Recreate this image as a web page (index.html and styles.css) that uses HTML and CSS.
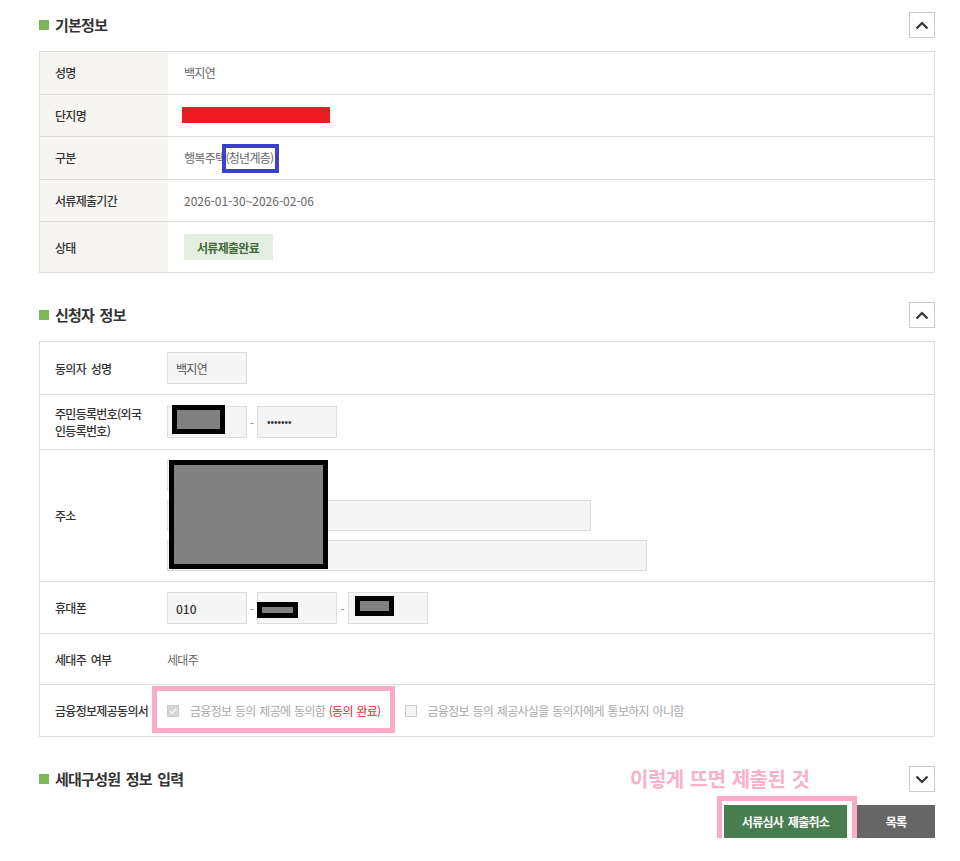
FILE: index.html
```html
<!DOCTYPE html>
<html lang="ko">
<head>
<meta charset="utf-8">
<title>서류제출</title>
<link rel="stylesheet" href="styles.css">
</head>
<body>
<div class="page">
  <section class="sec">
    <div class="sec-head">
      <h2 class="sec-title">기본정보</h2>
      <button class="toggle" type="button"><svg width="14" height="9" viewBox="0 0 14 9"><polyline points="1.5,7.5 7,2 12.5,7.5" fill="none" stroke="#333" stroke-width="2.2"/></svg></button>
    </div>
    <div class="info-table">
      <div class="info-row"><div class="info-th">성명</div><div class="info-td">백지연</div></div>
      <div class="info-row"><div class="info-th">단지명</div><div class="info-td"><span class="redact-red"></span></div></div>
      <div class="info-row"><div class="info-th">구분</div><div class="info-td">행복주택<span class="mark">(청년계층)</span></div></div>
      <div class="info-row"><div class="info-th">서류제출기간</div><div class="info-td num">2026-01-30~2026-02-06</div></div>
      <div class="info-row info-row--status"><div class="info-th">상태</div><div class="info-td"><span class="badge">서류제출완료</span></div></div>
    </div>
  </section>

  <section class="sec">
    <div class="sec-head">
      <h2 class="sec-title">신청자 정보</h2>
      <button class="toggle" type="button"><svg width="14" height="9" viewBox="0 0 14 9"><polyline points="1.5,7.5 7,2 12.5,7.5" fill="none" stroke="#333" stroke-width="2.2"/></svg></button>
    </div>
    <div class="form-table">
      <div class="form-row">
        <div class="form-th">동의자 성명</div>
        <div class="form-td"><div class="field">백지연</div></div>
      </div>
      <div class="form-row">
        <div class="form-th">주민등록번호(외국<br>인등록번호)</div>
        <div class="form-td">
          <div class="field"><span class="redact redact--rrn"></span></div>
          <span class="dash">-</span>
          <div class="field field--dots"><span class="dots">•••••••</span></div>
        </div>
      </div>
      <div class="form-row">
        <div class="form-th">주소</div>
        <div class="form-td">
          <div class="addr">
            <div class="field field--addr field--zip"></div>
            <div class="field field--addr field--addr1"></div>
            <div class="field field--addr field--addr2"></div>
            <span class="redact redact--addr"></span>
          </div>
        </div>
      </div>
      <div class="form-row">
        <div class="form-th">휴대폰</div>
        <div class="form-td form-td--tight">
          <div class="field field--strong">010</div>
          <span class="dash">-</span>
          <div class="field"><span class="redact redact--ph2"></span></div>
          <span class="dash dash--wide">-</span>
          <div class="field"><span class="redact redact--ph3"></span></div>
        </div>
      </div>
      <div class="form-row form-row--text">
        <div class="form-th">세대주 여부</div>
        <div class="form-td form-td--value">세대주</div>
      </div>
      <div class="form-row form-row--text form-row--agree">
        <div class="form-th">금융정보제공동의서</div>
        <div class="form-td">
          <span class="check check--on"><svg width="10" height="10" viewBox="0 0 10 10"><polyline points="2,5.2 4.2,7.4 8.2,2.8" fill="none" stroke="#f4f4f4" stroke-width="1.6"/></svg></span>
          <span class="agree-text">금융정보 등의 제공에 동의함 <span class="agree-done">(동의 완료)</span></span>
          <span class="check check--off"></span>
          <span class="agree-text">금융정보 등의 제공사실을 동의자에게 통보하지 아니함</span>
        </div>
        <span class="pink-ring pink-ring--agree"></span>
      </div>
    </div>
  </section>

  <section class="sec sec--last">
    <div class="sec-head">
      <h2 class="sec-title">세대구성원 정보 입력</h2>
      <span class="note">이렇게 뜨면 제출된 것</span>
      <button class="toggle" type="button"><svg width="14" height="9" viewBox="0 0 14 9"><polyline points="1.5,1.5 7,7 12.5,1.5" fill="none" stroke="#333" stroke-width="2.2"/></svg></button>
    </div>
  </section>

  <div class="actions">
    <button class="btn btn--primary" type="button">서류심사 제출취소</button>
    <button class="btn btn--list" type="button">목록</button>
  </div>
</div>
</body>
</html>
```

FILE: styles.css
```css
* { box-sizing: border-box; }

body {
  margin: 0;
  background: #fff;
  font-family: "Noto Sans CJK KR", sans-serif;
  font-size: 12px;
  color: #333;
  letter-spacing: -0.7px;
  word-spacing: 2px;
}

.page {
  padding: 12px 25px 0 39px;
}

.sec { margin-bottom: 29px; }
.sec--last { margin-bottom: 13px; }

.sec-head {
  position: relative;
  display: flex;
  align-items: center;
  justify-content: space-between;
  height: 26px;
  margin-bottom: 13px;
}

.sec-title {
  margin: 0;
  display: flex;
  align-items: center;
  gap: 6px;
  font-size: 15px;
  font-weight: 700;
  line-height: 26px;
  color: #333;
  letter-spacing: -0.75px;
  word-spacing: 2px;
}
.sec-title::before {
  content: "";
  width: 10px;
  height: 10px;
  background: #7cb85a;
}

.toggle {
  width: 26px;
  height: 26px;
  padding: 0;
  border: 1px solid #ccc;
  background: #fff;
  display: flex;
  align-items: center;
  justify-content: center;
}

/* basic info table */
.info-table { border: 1px solid #ddd; }
.info-row {
  display: grid;
  grid-template-columns: 128px 1fr;
  min-height: 42.6px;
  border-bottom: 1px solid #ddd;
}
.info-row:last-child { border-bottom: 0; }
.info-row--status { min-height: 50px; }
.info-th {
  background: #f6f5f1;
  padding-left: 15px;
  display: flex;
  align-items: center;
  font-weight: 500;
  color: #333;
}
.info-td {
  padding-left: 16px;
  display: flex;
  align-items: center;
  color: #666;
}
.num { letter-spacing: 0; }

.redact-red {
  width: 148px;
  height: 16px;
  margin-left: -2px;
  background: #ed1c24;
}

.mark {
  position: relative;
  display: inline-block;
  line-height: 16px;
}
.mark::after {
  content: "";
  position: absolute;
  left: -3px;
  right: -6px;
  top: -6px;
  bottom: -7px;
  border: 4px solid #3c3fd0;
}

.badge {
  display: inline-flex;
  align-items: center;
  height: 26px;
  padding: 0 14px 0 13px;
  background: #e5efe1;
  color: #3f6a36;
  font-weight: 700;
}

/* applicant form table */
.form-table { border: 1px solid #ddd; }
.form-row {
  position: relative;
  display: grid;
  grid-template-columns: 127px 1fr;
  border-bottom: 1px solid #ddd;
}
.form-row:last-child { border-bottom: 0; }
.form-row--text { min-height: 51px; }
.form-th {
  padding: 10px 15px;
  display: flex;
  align-items: center;
  line-height: 17px;
  font-weight: 500;
  color: #333;
}
.form-td {
  padding: 10px 0;
  display: flex;
  align-items: center;
  color: #555;
}
.form-td--tight { padding: 10px 0 9px; }
.form-td--value { color: #666; }

.field {
  position: relative;
  width: 80px;
  height: 32px;
  padding-left: 8px;
  border: 1px solid #ddd;
  background: #f5f5f5;
  display: flex;
  align-items: center;
  color: #555;
}
.field--strong { font-weight: 500; color: #333; letter-spacing: 0; }
.field--dots { padding-left: 9px; }
.dots {
  font-family: "Liberation Sans", sans-serif;
  font-size: 10px;
  letter-spacing: 0;
  color: #333;
}

.dash {
  width: 10px;
  text-align: center;
  color: #888;
  letter-spacing: 0;
}
.dash--wide { width: 11px; }

.addr {
  position: relative;
  display: flex;
  flex-direction: column;
  gap: 9px;
}
.field--addr { height: 31px; }
.field--zip { width: 120px; }
.field--addr1 { width: 424px; }
.field--addr2 { width: 480px; }

.redact {
  position: absolute;
  border: 5px solid #000;
  background: #808080;
}
.redact--rrn { left: 4px; top: -2px; width: 53px; height: 29px; }
.redact--addr { left: 2px; top: 0; width: 159px; height: 109px; }
.redact--ph2 { left: -1px; top: 9px; width: 41px; height: 16px; }
.redact--ph3 { left: 6px; top: 3px; width: 39px; height: 20px; }

.check {
  width: 12px;
  height: 12px;
  border: 1px solid #ccc;
  display: flex;
  align-items: center;
  justify-content: center;
  flex: none;
}
.check--on { background: #d6d6d6; margin-right: 11px; }
.check--off { background: #f4f4f4; margin: 0 10px 0 25px; }
.agree-text { color: #a8a8a8; white-space: nowrap; word-spacing: 1px; }
.agree-done { color: #e0262b; }

.pink-ring {
  position: absolute;
  border: 5px solid #fbaac9;
}
.pink-ring--agree { left: 112px; top: 1px; width: 243px; height: 47px; }

.note {
  position: absolute;
  left: 591px;
  top: 0;
  font-size: 20px;
  font-weight: 700;
  line-height: 26px;
  color: #f8b0cb;
  letter-spacing: -0.5px;
  word-spacing: 1px;
}

.actions {
  display: flex;
  justify-content: flex-end;
  gap: 10px;
}
.btn {
  height: 33px;
  padding: 0;
  border: 0;
  display: flex;
  align-items: center;
  justify-content: center;
  font-family: "Noto Sans CJK KR", sans-serif;
  font-size: 12px;
  font-weight: 700;
  letter-spacing: -0.7px;
  word-spacing: 2px;
  color: #fff;
}
.btn--primary {
  position: relative;
  width: 123px;
  background: #487d4f;
}
.btn--primary::after {
  content: "";
  position: absolute;
  left: -7px;
  right: -10px;
  top: -9px;
  bottom: -7px;
  border: 5px solid #fbaac9;
}
.btn--list {
  width: 78px;
  background: #666;
}
```
